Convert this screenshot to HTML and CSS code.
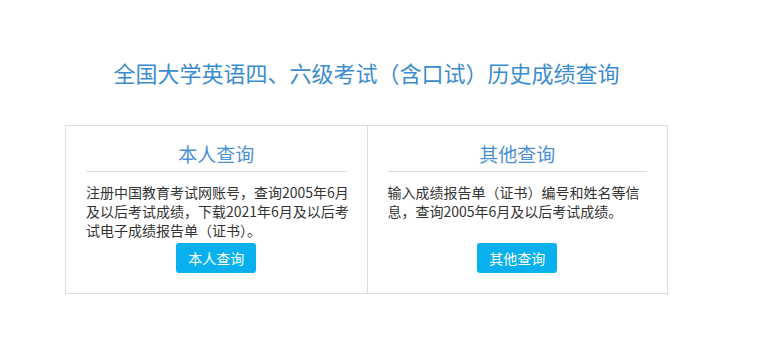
FILE: index.html
```html
<!DOCTYPE html>
<html lang="zh-CN">
<head>
    <meta charset="UTF-8">
    <title>全国大学英语四、六级考试（含口试）历史成绩查询</title>
    <link rel="stylesheet" href="styles.css">
</head>
<body>
    <div class="page">
        <h1 class="title">全国大学英语四、六级考试（含口试）历史成绩查询</h1>
        <div class="query-box">
            <div class="query-col">
                <h2 class="query-head">本人查询</h2>
                <p class="query-text">注册中国教育考试网账号，查询2005年6月及以后考试成绩，下载2021年6月及以后考试电子成绩报告单（证书）。</p>
                <a class="query-btn" href="#">本人查询</a>
            </div>
            <div class="query-col">
                <h2 class="query-head">其他查询</h2>
                <p class="query-text">输入成绩报告单（证书）编号和姓名等信息，查询2005年6月及以后考试成绩。</p>
                <a class="query-btn" href="#">其他查询</a>
            </div>
        </div>
    </div>
</body>
</html>
```

FILE: styles.css
```css
body {
    margin: 0;
    font-family: "Noto Sans CJK SC", "Microsoft YaHei", sans-serif;
    color: #333;
    background: #fff;
}
.page {
    width: 603px;
    margin-left: 65px;
    padding-top: 57px;
}
.title {
    margin: 0 0 38px;
    font-size: 22px;
    line-height: 30px;
    font-weight: normal;
    color: #3b8ccf;
    text-align: center;
    white-space: nowrap;
}
.query-box {
    display: grid;
    grid-template-columns: 1fr 1fr;
    border: 1px solid #ddd;
}
.query-col {
    display: flex;
    flex-direction: column;
    align-items: center;
    padding: 13px 14px 20px 20px;
}
.query-col + .query-col {
    border-left: 1px solid #ddd;
}
.query-head {
    align-self: stretch;
    margin: 0 6px 0 0;
    padding-bottom: 2px;
    border-bottom: 1px solid #ddd;
    font-size: 19px;
    line-height: 30px;
    font-weight: normal;
    color: #4a8fd4;
    text-align: center;
}
.query-text {
    align-self: stretch;
    min-height: 60px;
    margin: 11px 0 0;
    font-size: 14px;
    line-height: 19px;
}
.query-btn {
    display: block;
    width: 80px;
    height: 30px;
    margin-right: 6px;
    border-radius: 3px;
    background: #08b0ee;
    color: #fff;
    font-size: 14px;
    line-height: 30px;
    text-align: center;
    text-decoration: none;
}
```
